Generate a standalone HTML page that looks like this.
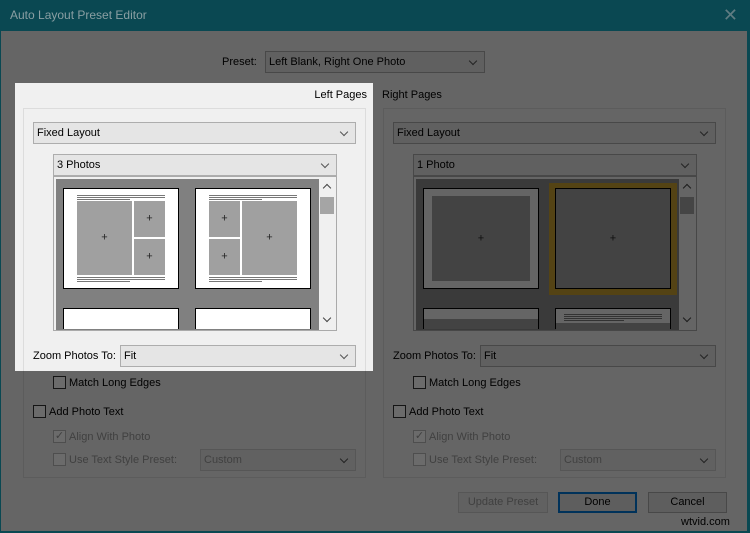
<!DOCTYPE html>
<html><head><meta charset="utf-8"><style>
*{box-sizing:border-box;margin:0;padding:0}
body{width:750px;height:533px;overflow:hidden;background:#f0f0f0;font-family:"Liberation Sans",sans-serif;font-size:11px;color:#000;position:relative}
.a{position:absolute}
.dd{position:absolute;background:#e5e5e5;border:1px solid #adadad;height:22px;line-height:20px;padding-left:3px;white-space:nowrap}
.dd:after{content:"";position:absolute;right:8px;top:6px;width:5px;height:5px;border-right:1px solid #555;border-bottom:1px solid #555;transform:rotate(45deg)}
.grp{position:absolute;border:1px solid #dcdcdc}
.cb{position:absolute;width:13px;height:13px;border:1px solid #333;background:#fff}
.lbl{position:absolute;white-space:nowrap}
.list{position:absolute;border:1px solid #aaa;background:#f0f0f0}
.sb{position:absolute;right:0;top:0;width:17px;height:100%;background:#f0f0f0}
.up,.dn{position:absolute;left:5px;width:6px;height:6px;border-left:1.5px solid #444;border-top:1.5px solid #444}
.up{top:8px;transform:rotate(45deg)}
.dn{top:138px;transform:rotate(225deg)}
.th{position:absolute;background:#fff;border:1px solid #000}
.ph{position:absolute;background:#a0a0a0}
.ph:after{content:"+";position:absolute;left:50%;top:50%;transform:translate(-50%,-55%);font-size:11px;color:#222}
.ln{position:absolute;height:1px;background:#777}
.btn{position:absolute;height:21px;border:1px solid #adadad;background:#e1e1e1;text-align:center;line-height:19px}
#ov{position:absolute;left:15px;top:83px;width:358px;height:288px;box-shadow:0 0 0 2000px rgba(0,0,0,.58);z-index:5}
#tb{position:absolute;left:0;top:0;width:750px;height:31px;background:#0a4852;z-index:6;color:#8a9fa3;font-size:12px;line-height:31px;padding-left:10px}
.br{position:absolute;z-index:6;background:#0a4852}
</style></head><body>
<div id="tb">Auto Layout Preset Editor<span class="a" style="right:12px;top:0;font-size:18px;color:#5f7c82">✕</span></div>
<div class="br" style="left:0;top:31px;width:1px;height:502px"></div>
<div class="br" style="right:0;top:31px;width:3px;height:502px"></div>
<div class="br" style="left:0;bottom:0;width:750px;height:2px"></div>

<div class="lbl" style="left:222px;top:56px">Preset:</div>
<div class="dd" style="left:265px;top:51px;width:220px">Left Blank, Right One Photo</div>
<div class="lbl" style="right:383px;top:89px">Left Pages</div>
<div class="lbl" style="left:382px;top:89px">Right Pages</div>

<!-- LEFT -->
<div class="grp" style="left:23px;top:108px;width:343px;height:370px"></div>
<div class="dd" style="left:33px;top:122px;width:323px">Fixed Layout</div>
<div class="dd" style="left:53px;top:154px;width:284px">3 Photos</div>
<div class="list" style="left:53px;top:176px;width:284px;height:155px">
 <div class="a" style="left:2px;top:2px;width:263px;height:151px;background:#808080"></div>
 <div class="sb"><div class="up"></div><div class="a" style="left:1px;top:20px;width:14px;height:17px;background:#a5a5a5"></div><div class="dn"></div></div>
</div>
<div class="th" style="left:63px;top:188px;width:116px;height:101px">
 <div class="ln" style="left:13px;top:6px;width:88px"></div><div class="ln" style="left:13px;top:8px;width:88px"></div><div class="ln" style="left:13px;top:10px;width:53px"></div>
 <div class="ph" style="left:13px;top:12px;width:55px;height:74px"></div>
 <div class="ph" style="left:70px;top:12px;width:31px;height:36px"></div>
 <div class="ph" style="left:70px;top:50px;width:31px;height:36px"></div>
 <div class="ln" style="left:13px;top:88px;width:88px"></div><div class="ln" style="left:13px;top:90px;width:88px"></div><div class="ln" style="left:13px;top:92px;width:53px"></div>
</div>
<div class="th" style="left:195px;top:188px;width:116px;height:101px">
 <div class="ln" style="left:13px;top:6px;width:88px"></div><div class="ln" style="left:13px;top:8px;width:88px"></div><div class="ln" style="left:13px;top:10px;width:53px"></div>
 <div class="ph" style="left:13px;top:12px;width:31px;height:36px"></div>
 <div class="ph" style="left:13px;top:50px;width:31px;height:36px"></div>
 <div class="ph" style="left:46px;top:12px;width:55px;height:74px"></div>
 <div class="ln" style="left:13px;top:88px;width:88px"></div><div class="ln" style="left:13px;top:90px;width:88px"></div><div class="ln" style="left:13px;top:92px;width:53px"></div>
</div>
<div class="th" style="left:63px;top:308px;width:116px;height:21px;border-bottom:none"></div>
<div class="th" style="left:195px;top:308px;width:116px;height:21px;border-bottom:none"></div>
<div class="lbl" style="left:33px;top:350px">Zoom Photos To:</div>
<div class="dd" style="left:120px;top:345px;width:236px">Fit</div>
<div class="cb" style="left:53px;top:376px"></div><div class="lbl" style="left:69px;top:377px">Match Long Edges</div>
<div class="cb" style="left:33px;top:405px"></div><div class="lbl" style="left:49px;top:406px">Add Photo Text</div>
<div class="cb" style="left:53px;top:430px;border-color:#bbb;color:#999;font-size:11px;line-height:11px;text-align:center">✓</div><div class="lbl" style="left:69px;top:431px;color:#999">Align With Photo</div>
<div class="cb" style="left:53px;top:453px;border-color:#bbb"></div><div class="lbl" style="left:69px;top:454px;color:#999">Use Text Style Preset:</div>
<div class="dd" style="left:200px;top:449px;width:156px;color:#999;background:#e8e8e8;border-color:#ccc">Custom</div>

<!-- RIGHT -->
<div class="grp" style="left:383px;top:108px;width:343px;height:370px"></div>
<div class="dd" style="left:393px;top:122px;width:323px">Fixed Layout</div>
<div class="dd" style="left:413px;top:154px;width:284px">1 Photo</div>
<div class="list" style="left:413px;top:176px;width:284px;height:155px">
 <div class="a" style="left:2px;top:2px;width:263px;height:151px;background:#8a8a8a"></div>
 <div class="sb"><div class="up"></div><div class="a" style="left:1px;top:20px;width:14px;height:17px;background:#a5a5a5"></div><div class="dn"></div></div>
</div>
<div class="th" style="left:423px;top:188px;width:116px;height:101px;background:#f0f0f0">
 <div class="ph" style="left:8px;top:7px;width:98px;height:85px"></div>
</div>
<div class="a" style="left:549px;top:183px;width:128px;height:112px;background:#c8a030"></div>
<div class="th" style="left:555px;top:188px;width:116px;height:101px;background:#a0a0a0"><div class="ph" style="left:0;top:0;width:114px;height:99px"></div></div>
<div class="th" style="left:423px;top:308px;width:116px;height:21px;border-bottom:none;background:#a0a0a0"><div class="a" style="left:0;top:0;width:114px;height:10px;background:#f0f0f0"></div></div>
<div class="th" style="left:555px;top:308px;width:116px;height:21px;border-bottom:none;background:#f0f0f0">
 <div class="ln" style="left:8px;top:5px;width:98px"></div><div class="ln" style="left:8px;top:7px;width:98px"></div><div class="ln" style="left:8px;top:9px;width:98px"></div><div class="ln" style="left:8px;top:11px;width:60px"></div>
 <div class="a" style="left:0;top:14px;width:114px;height:7px;background:#a0a0a0"></div>
</div>
<div class="lbl" style="left:393px;top:350px">Zoom Photos To:</div>
<div class="dd" style="left:480px;top:345px;width:236px">Fit</div>
<div class="cb" style="left:413px;top:376px"></div><div class="lbl" style="left:429px;top:377px">Match Long Edges</div>
<div class="cb" style="left:393px;top:405px"></div><div class="lbl" style="left:409px;top:406px">Add Photo Text</div>
<div class="cb" style="left:413px;top:430px;border-color:#bbb;color:#999;font-size:11px;line-height:11px;text-align:center">✓</div><div class="lbl" style="left:429px;top:431px;color:#999">Align With Photo</div>
<div class="cb" style="left:413px;top:453px;border-color:#bbb"></div><div class="lbl" style="left:429px;top:454px;color:#999">Use Text Style Preset:</div>
<div class="dd" style="left:560px;top:449px;width:156px;color:#999;background:#e8e8e8;border-color:#ccc">Custom</div>

<div class="btn" style="left:458px;top:492px;width:90px;color:#999;border-color:#ccc;background:#e6e6e6">Update Preset</div>
<div class="btn" style="left:558px;top:492px;width:79px;border:2px solid #0078d7;line-height:17px">Done</div>
<div class="btn" style="left:648px;top:492px;width:79px">Cancel</div>

<div id="ov"></div>
<div class="a" style="left:681px;top:516px;color:#000;z-index:7">wtvid.com</div>
</body></html>
